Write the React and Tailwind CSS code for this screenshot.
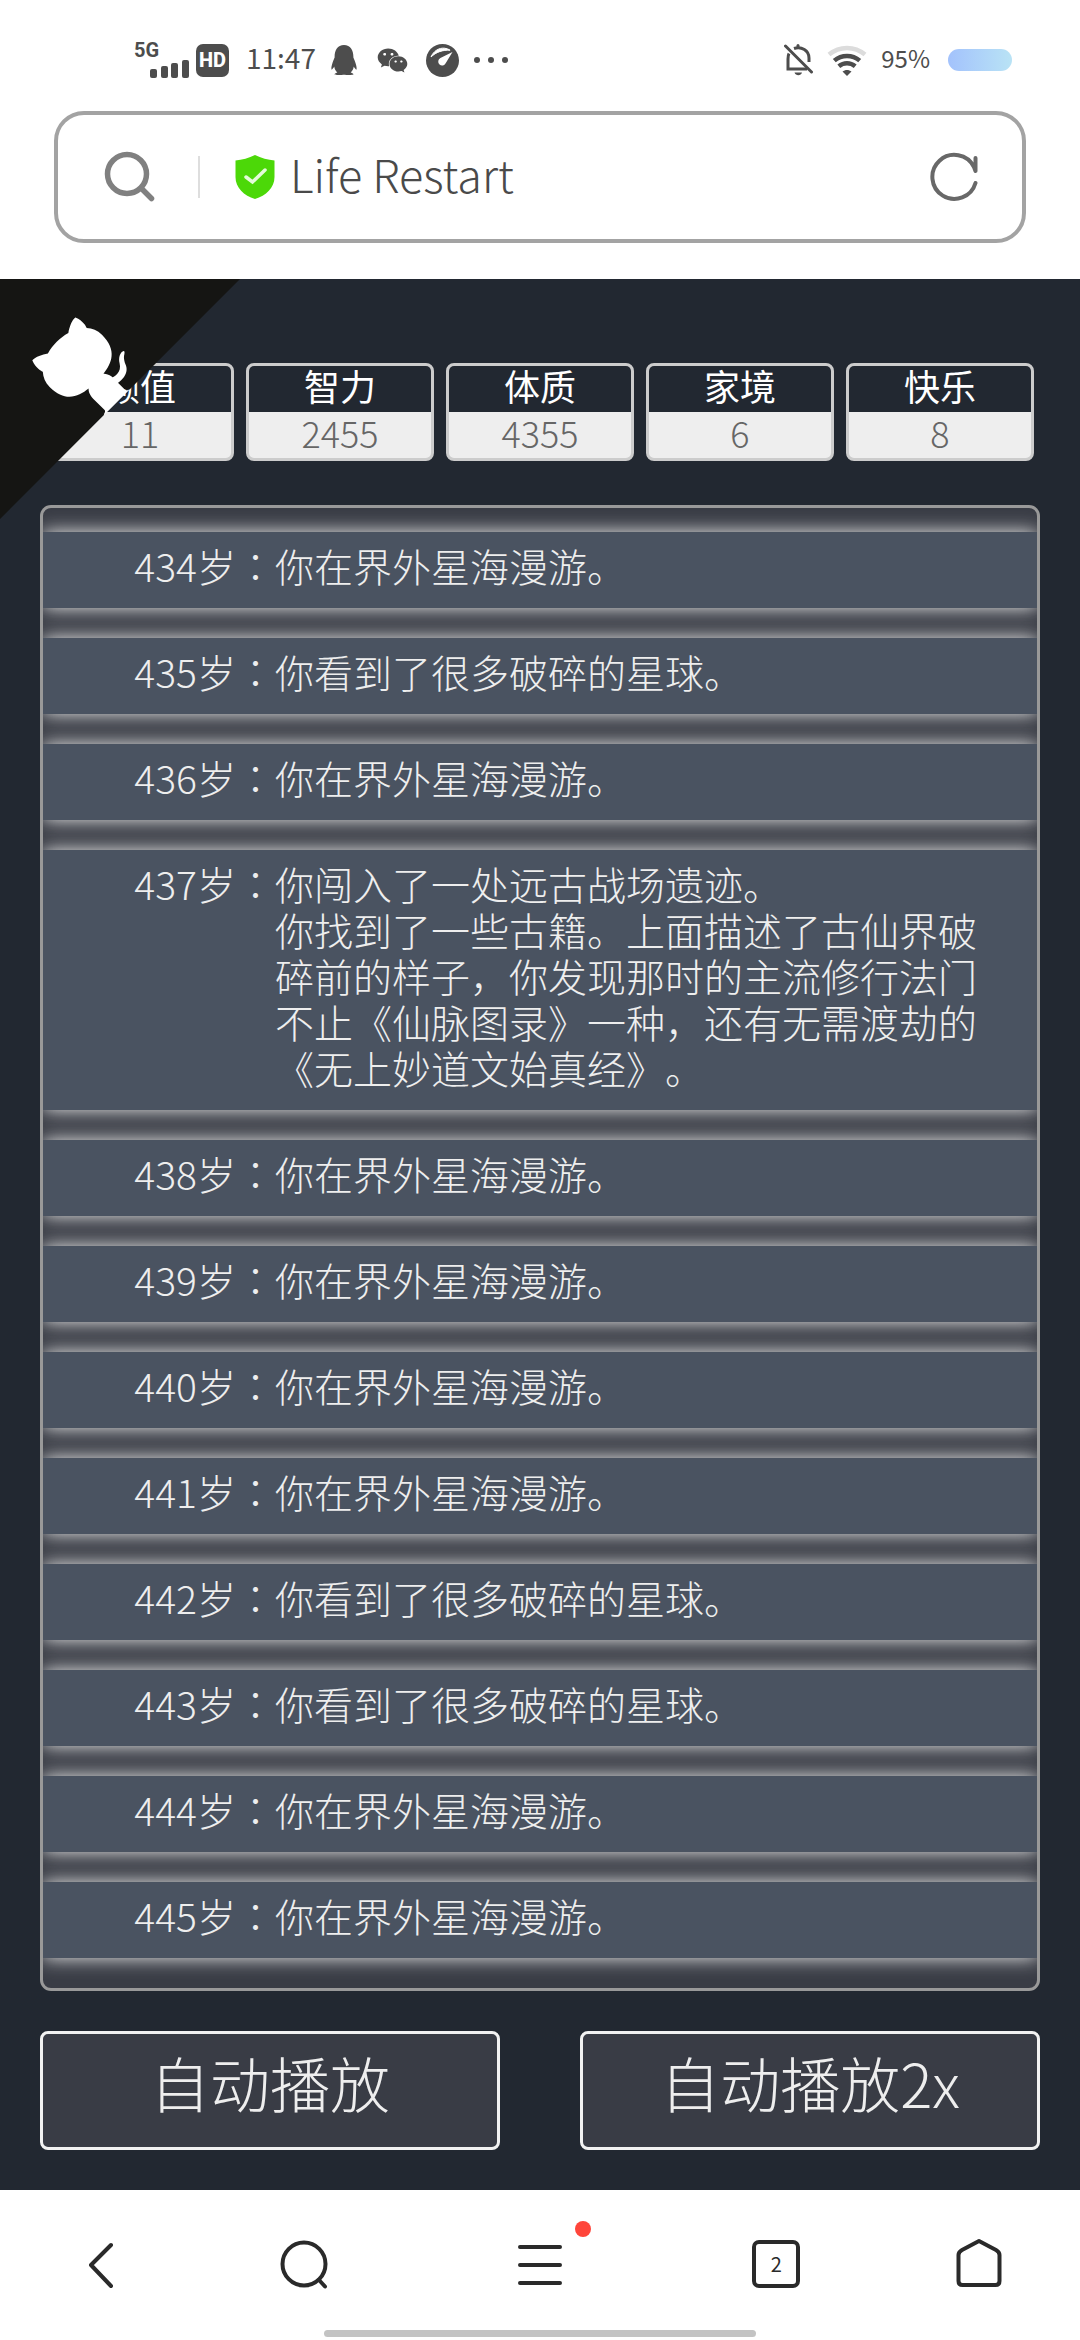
import React from "react";
import { FaQq, FaWeixin } from "react-icons/fa";

const STATS = [
  { label: "颜值", value: 11 },
  { label: "智力", value: 2455 },
  { label: "体质", value: 4355 },
  { label: "家境", value: 6 },
  { label: "快乐", value: 8 },
];

const ROAM = ["你在界外星海漫游。"];
const SHARDS = ["你看到了很多破碎的星球。"];

const LOG = [
  { age: 434, lines: ROAM },
  { age: 435, lines: SHARDS },
  { age: 436, lines: ROAM },
  {
    age: 437,
    lines: [
      "你闯入了一处远古战场遗迹。",
      "你找到了一些古籍。上面描述了古仙界破碎前的样子，你发现那时的主流修行法门不止《仙脉图录》一种，还有无需渡劫的《无上妙道文始真经》。",
    ],
  },
  { age: 438, lines: ROAM },
  { age: 439, lines: ROAM },
  { age: 440, lines: ROAM },
  { age: 441, lines: ROAM },
  { age: 442, lines: SHARDS },
  { age: 443, lines: SHARDS },
  { age: 444, lines: ROAM },
  { age: 445, lines: ROAM },
];

function SignalIcon() {
  return (
    <svg className="h-[20px] w-[40px]" viewBox="0 0 40 20" fill="currentColor" aria-hidden="true">
      <rect x="0" y="11" width="7" height="9" rx="2" />
      <rect x="11" y="8" width="7" height="12" rx="2" />
      <rect x="21" y="5" width="7" height="15" rx="2" />
      <rect x="32" y="2" width="7" height="18" rx="2" />
    </svg>
  );
}

function GaugeIcon() {
  return (
    <svg className="size-[33px]" viewBox="0 0 33 33" aria-hidden="true">
      <circle cx="16.5" cy="16.5" r="16.5" fill="currentColor" />
      <path d="M5 13C7.500 7 13 3.600 18.500 4.200c2.300.2 4 .9 5.600 2C17 5.800 10 8 5 13Z" fill="#fff" stroke="#fff" strokeWidth="1" strokeLinejoin="round" />
      <path d="M26.500 8 19.800 18.900a3.900 3.900 0 1 1-5.400-4.800Z" fill="#fff" />
    </svg>
  );
}

function BellOffIcon() {
  return (
    <svg className="h-[32px] w-[30px]" viewBox="0 0 30 32" fill="none" stroke="currentColor" strokeWidth="3" aria-hidden="true">
      <path d="M5 9.5C4 11.400 4 13 4 15v10h19" />
      <path d="M10 4.500C17.500 2 25 6.500 25 14v4" />
      <path d="M14 3.200V1.500" strokeLinecap="round" />
      <path d="M1.500 2 27.500 28" strokeLinecap="round" />
      <path d="M10.500 28.500h7.500c-.6 1.800-2 2.800-3.700 2.800s-3.200-1-3.800-2.800Z" fill="currentColor" stroke="none" />
    </svg>
  );
}

function WifiIcon() {
  return (
    <svg className="h-[31px] w-[40px]" viewBox="0 0 40 31" fill="none" stroke="currentColor" strokeWidth="4.500" aria-hidden="true">
      <path d="M2 9.500C12.500.7 27.500.7 38 9.500" stroke="#dcdcdc" />
      <path d="M7.300 15.600C14.700 9.300 25.300 9.300 32.700 15.600" />
      <path d="M11.800 21.200C16.700 17.200 23.300 17.200 28.200 21.200" />
      <path d="M15.500 26.600c2.600-2.300 6.400-2.300 9 0L20 31Z" fill="currentColor" stroke="none" />
    </svg>
  );
}

function StatusBar() {
  return (
    <div className="flex h-[111px] items-start justify-between pl-[134px] pr-[68px] pt-[40px] text-[#4d4d4d]">
      <div className="flex h-[40px] items-center">
        <div className="flex h-[36px] w-[56px] flex-col">
          <span className="h-[16px] font-['Roboto',sans-serif] text-[20px] font-bold leading-[16px]">5G</span>
          <span className="pl-[16px]">
            <SignalIcon />
          </span>
        </div>
        <span className="ml-[6px] flex size-[33px] items-center justify-center rounded-[7px] bg-[#4d4d4d] font-['Roboto',sans-serif] text-[20px] font-extrabold leading-none text-white">
          HD
        </span>
        <span className="ml-[17px] w-[72px] pb-[6px] text-[28px] leading-[40px]">11:47</span>
        <FaQq className="ml-[11px] size-[30px]" aria-hidden="true" />
        <FaWeixin className="ml-[18px] size-[31px]" aria-hidden="true" />
        <span className="ml-[18px]">
          <GaugeIcon />
        </span>
        <span className="ml-[15px] flex gap-[8px]" aria-hidden="true">
          <i className="size-[6px] rounded-full bg-[#4d4d4d]" />
          <i className="size-[6px] rounded-full bg-[#4d4d4d]" />
          <i className="size-[6px] rounded-full bg-[#4d4d4d]" />
        </span>
      </div>
      <div className="flex h-[40px] items-center">
        <BellOffIcon />
        <span className="ml-[13px]">
          <WifiIcon />
        </span>
        <span className="ml-[14px] pb-[4px] text-[24px] leading-[36px]">95%</span>
        <span className="ml-[18px] h-[22px] w-[64px] rounded-full bg-linear-to-r from-[#a3c2fc] to-[#b9e3f5]" />
      </div>
    </div>
  );
}

function AddressBar() {
  return (
    <div className="mx-[54px] flex h-[132px] items-center rounded-[30px] border-4 border-[#a3a3a3] pl-[46px] pr-[41px]">
      <button type="button" aria-label="搜索" className="text-[#808080]">
        <svg className="size-[52px]" viewBox="0 0 52 52" fill="none" stroke="currentColor" strokeWidth="5.500" strokeLinecap="round" aria-hidden="true">
          <circle cx="23" cy="23" r="19.500" />
          <path d="M37.500 37.500 47.500 47.500" />
        </svg>
      </button>
      <span className="ml-[42px] h-[42px] w-[2px] bg-[#dedede]" />
      <svg className="ml-[35px] h-[44px] w-[40px]" viewBox="0 0 40 44" aria-hidden="true">
        <path d="M20 0C26 3 33 5 39.500 5.500V22C39.500 33 31 40.500 20 44 9 40.500.5 33 .5 22V5.500C7 5 14 3 20 0Z" fill="#4cd808" />
        <path d="M11 22 17.500 27 30 15" fill="none" stroke="#e4fbd9" strokeWidth="3.500" strokeLinecap="round" />
      </svg>
      <label htmlFor="address" className="sr-only">
        地址
      </label>
      <input
        id="address"
        type="text"
        defaultValue="Life Restart"
        className="ml-[15px] h-[80px] min-w-0 flex-1 bg-transparent pb-[8px] text-[45px] font-light leading-[72px] text-[#4a4a4a] outline-none"
      />
      <button type="button" aria-label="刷新" className="text-[#686868]">
        <svg className="size-[52px]" viewBox="0 0 52 52" fill="none" stroke="currentColor" strokeWidth="4" strokeLinecap="round" strokeLinejoin="round" aria-hidden="true">
          <path d="M46.500 32A22 22 0 1 1 45 16l1.500 4V7" />
        </svg>
      </button>
    </div>
  );
}

function GithubCorner() {
  return (
    <a href="#source" aria-label="GitHub" className="absolute left-0 top-0 size-[240px]">
      <svg className="size-full -scale-x-100 text-white" viewBox="0 0 250 250" aria-hidden="true">
        <path d="M0,0 L115,115 L130,115 L142,142 L250,250 L250,0 Z" fill="#151513" />
        <path
          d="M128.3,109.0 C113.8,99.7 119.0,89.6 119.0,89.6 C122.0,82.7 120.5,78.6 120.5,78.6 C119.2,72.0 123.4,76.3 123.4,76.3 C127.3,80.9 125.5,87.3 125.5,87.3 C122.9,97.6 130.6,101.9 134.4,103.2"
          fill="currentColor"
        />
        <path
          d="M115.0,115.0 C114.9,115.1 118.7,116.5 119.8,115.4 L133.7,101.6 C136.9,99.2 139.9,98.4 142.2,98.6 C133.8,88.0 127.5,74.4 143.8,58.0 C148.5,53.4 154.0,51.2 159.7,51.0 C160.3,49.4 163.2,43.6 171.4,40.1 C171.4,40.1 176.1,42.5 178.8,56.2 C183.1,58.6 187.2,61.8 190.9,65.4 C194.5,69.0 197.7,73.2 200.1,77.6 C213.8,80.2 216.3,84.9 216.3,84.9 C212.7,93.1 206.9,96.0 205.4,96.6 C205.1,102.4 203.0,107.8 198.3,112.5 C181.9,128.9 168.3,122.5 157.7,114.1 C157.9,116.9 156.7,120.9 152.7,124.9 L141.0,136.5 C139.8,137.7 141.6,141.9 141.8,141.8 Z"
          fill="currentColor"
        />
      </svg>
    </a>
  );
}

function Stats() {
  return (
    <dl className="mx-[46px] grid grid-cols-5 gap-[12px] text-center">
      {STATS.map((s) => (
        <div key={s.label} className="rounded-lg border-3 border-[#cccccc] bg-[#eeeeee]">
          <dt className="h-[46px] rounded-t-[5px] bg-[#222831] text-[36px] leading-[38px] text-white">{s.label}</dt>
          <dd className="h-[46px] text-[36px] font-light leading-[40px] text-[#666666]">{s.value}</dd>
        </div>
      ))}
    </dl>
  );
}

function LifeLog() {
  return (
    <ul className="mx-[40px] mt-[44px] flex flex-col gap-[30px] overflow-hidden rounded-[11px] border-3 border-[#999999] bg-[#393c45] pb-[30px] pt-[24px] text-[39px] font-light leading-[46px] text-[#eeeeee] [text-spacing-trim:space-all]">
      {LOG.map((e) => (
        <li key={e.age} className="flex bg-[#4a5361] pb-[20px] pr-[44px] pt-[10px] shadow-[0_0_18px_#eeeeee]">
          <span className="w-[232px] shrink-0 text-right">
            {e.age}岁<span className="font-['Noto_Sans_CJK_TC',sans-serif]" lang="zh-TW">：</span>
          </span>
          <div className="flex-1">
            {e.lines.map((line) => (
              <p key={line}>{line}</p>
            ))}
          </div>
        </li>
      ))}
    </ul>
  );
}

function PlayButton({ children }) {
  return (
    <button
      type="button"
      className="h-[119px] flex-1 rounded-lg border-3 border-[#f2f2f2] bg-[#393c45] pb-[18px] text-[60px] font-light leading-[90px] text-[#eeeeee]"
    >
      {children}
    </button>
  );
}

function NavButton({ label, children }) {
  return (
    <button type="button" aria-label={label} className="flex h-[56px] items-center justify-center">
      {children}
    </button>
  );
}

function NavIcon({ children }) {
  return (
    <svg className="size-[52px]" viewBox="0 0 52 52" fill="none" stroke="currentColor" strokeWidth="4" strokeLinecap="round" strokeLinejoin="round" aria-hidden="true">
      {children}
    </svg>
  );
}

function BottomNav() {
  return (
    <footer className="flex h-[150px] flex-col items-center justify-between bg-white pb-[3px] pt-[46px] text-[#2a2a2a]">
      <nav className="grid w-full grid-cols-[3fr_3fr_4fr_3fr_3fr]">
        <NavButton label="后退">
          <NavIcon>
            <path d="M36 7 16 27 36 48" />
          </NavIcon>
        </NavButton>
        <NavButton label="搜索">
          <NavIcon>
            <ellipse cx="26" cy="26" rx="21.500" ry="21.500" />
            <path d="M41 42 47 48.500" />
          </NavIcon>
        </NavButton>
        <NavButton label="菜单">
          <span className="relative">
            <NavIcon>
              <path d="M6 9H46M6 27H46M6 45H46" />
            </NavIcon>
            <i className="absolute -right-[25px] -top-[17px] size-[16px] rounded-full bg-[#ff453a]" />
          </span>
        </NavButton>
        <NavButton label="标签页">
          <span className="flex size-[48px] items-center justify-center rounded-[7px] border-4 border-[#2a2a2a] text-[20px] leading-none">
            2
          </span>
        </NavButton>
        <NavButton label="主页">
          <NavIcon>
            <path d="M26 3 43 12Q46.500 14 46.500 17V43Q46.500 47 42.500 47H9.500Q5.500 47 5.500 43V17Q5.500 14 9 12Z" />
          </NavIcon>
        </NavButton>
      </nav>
      <span className="h-[7px] w-2/5 rounded-full bg-[#c3c3c3]" />
    </footer>
  );
}

export default function App() {
  return (
    <div className="flex min-h-screen flex-col bg-[#222831] font-['Noto_Sans_CJK_SC',sans-serif]">
      <header className="bg-white pb-[36px]">
        <StatusBar />
        <AddressBar />
      </header>
      <main className="relative flex-1 pt-[84px]">
        <Stats />
        <GithubCorner />
        <LifeLog />
        <div className="mx-[40px] mb-[40px] mt-[40px] flex gap-[80px]">
          <PlayButton>自动播放</PlayButton>
          <PlayButton>自动播放2x</PlayButton>
        </div>
      </main>
      <BottomNav />
    </div>
  );
}
